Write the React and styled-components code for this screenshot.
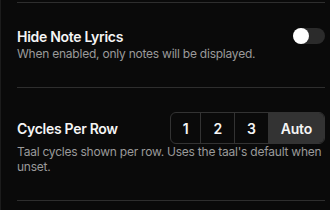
import React, { useState } from "react";
import styled, { createGlobalStyle } from "styled-components";

const Global = createGlobalStyle`
  html, body { margin: 0; padding: 0; background: #0a0a0a; }
  body { font-family: Inter, "Noto Sans", sans-serif; -webkit-font-smoothing: antialiased; }
`;

const Panel = styled.div`
  width: 330px;
  height: 210px;
  box-sizing: border-box;
  background: #0a0a0a;
  border-left: 1px solid #1c1c1c;
  padding: 2px 5px 0 16px;
  overflow: hidden;
`;

const Row = styled.div`
  display: flex;
  flex-direction: column;
  padding: 24px 0 26px;
  border-top: 1px solid #2e2e2e;
  &:last-child { border-bottom: 1px solid #2e2e2e; }
`;

const Header = styled.div`
  display: flex;
  align-items: ${(p) => (p.$center ? "center" : "flex-start")};
  justify-content: space-between;
`;

const Title = styled.div`
  font-size: 14px;
  line-height: 19px;
  font-weight: 600;
  letter-spacing: -0.3px;
  color: #f5f5f5;
`;

const Desc = styled.div`
  font-size: 12px;
  line-height: 15px;
  letter-spacing: -0.23px;
  color: #9a9a9a;
  margin-top: ${(p) => p.$mt || 0}px;
`;

const Track = styled.button`
  width: 32px;
  height: 16px;
  border: none;
  padding: 0;
  border-radius: 8px;
  background: #2b2b2b;
  position: relative;
  margin-top: 1px;
  cursor: pointer;
`;

const Knob = styled.span`
  position: absolute;
  top: 0;
  left: ${(p) => (p.$on ? "16px" : "0")};
  width: 16px;
  height: 16px;
  border-radius: 50%;
  background: #ffffff;
`;

const Segmented = styled.div`
  display: flex;
  border: 1px solid #333;
  border-radius: 6px;
  overflow: hidden;
  height: 32px;
  box-sizing: border-box;
`;

const Seg = styled.button`
  border: none;
  border-left: ${(p) => (p.$first ? "none" : "1px solid #333")};
  background: ${(p) => (p.$active ? "#333333" : "transparent")};
  color: #f5f5f5;
  font-family: inherit;
  font-size: 14px;
  font-weight: 600;
  letter-spacing: -0.2px;
  padding: 0 12px;
  cursor: pointer;
`;

export default function App() {
  const [hide, setHide] = useState(false);
  const [cycles, setCycles] = useState("Auto");
  const opts = ["1", "2", "3", "Auto"];
  return (
    <>
      <Global />
      <Panel>
        <Row>
          <Header>
            <Title>Hide Note Lyrics</Title>
            <Track onClick={() => setHide(!hide)}>
              <Knob $on={hide} />
            </Track>
          </Header>
          <Desc>When enabled, only notes will be displayed.</Desc>
        </Row>
        <Row>
          <Header $center>
            <Title>Cycles Per Row</Title>
            <Segmented>
              {opts.map((o, i) => (
                <Seg
                  key={o}
                  $first={i === 0}
                  $active={cycles === o}
                  onClick={() => setCycles(o)}
                >
                  {o}
                </Seg>
              ))}
            </Segmented>
          </Header>
          <Desc>Taal cycles shown per row. Uses the taal's default when unset.</Desc>
        </Row>
      </Panel>
    </>
  );
}
